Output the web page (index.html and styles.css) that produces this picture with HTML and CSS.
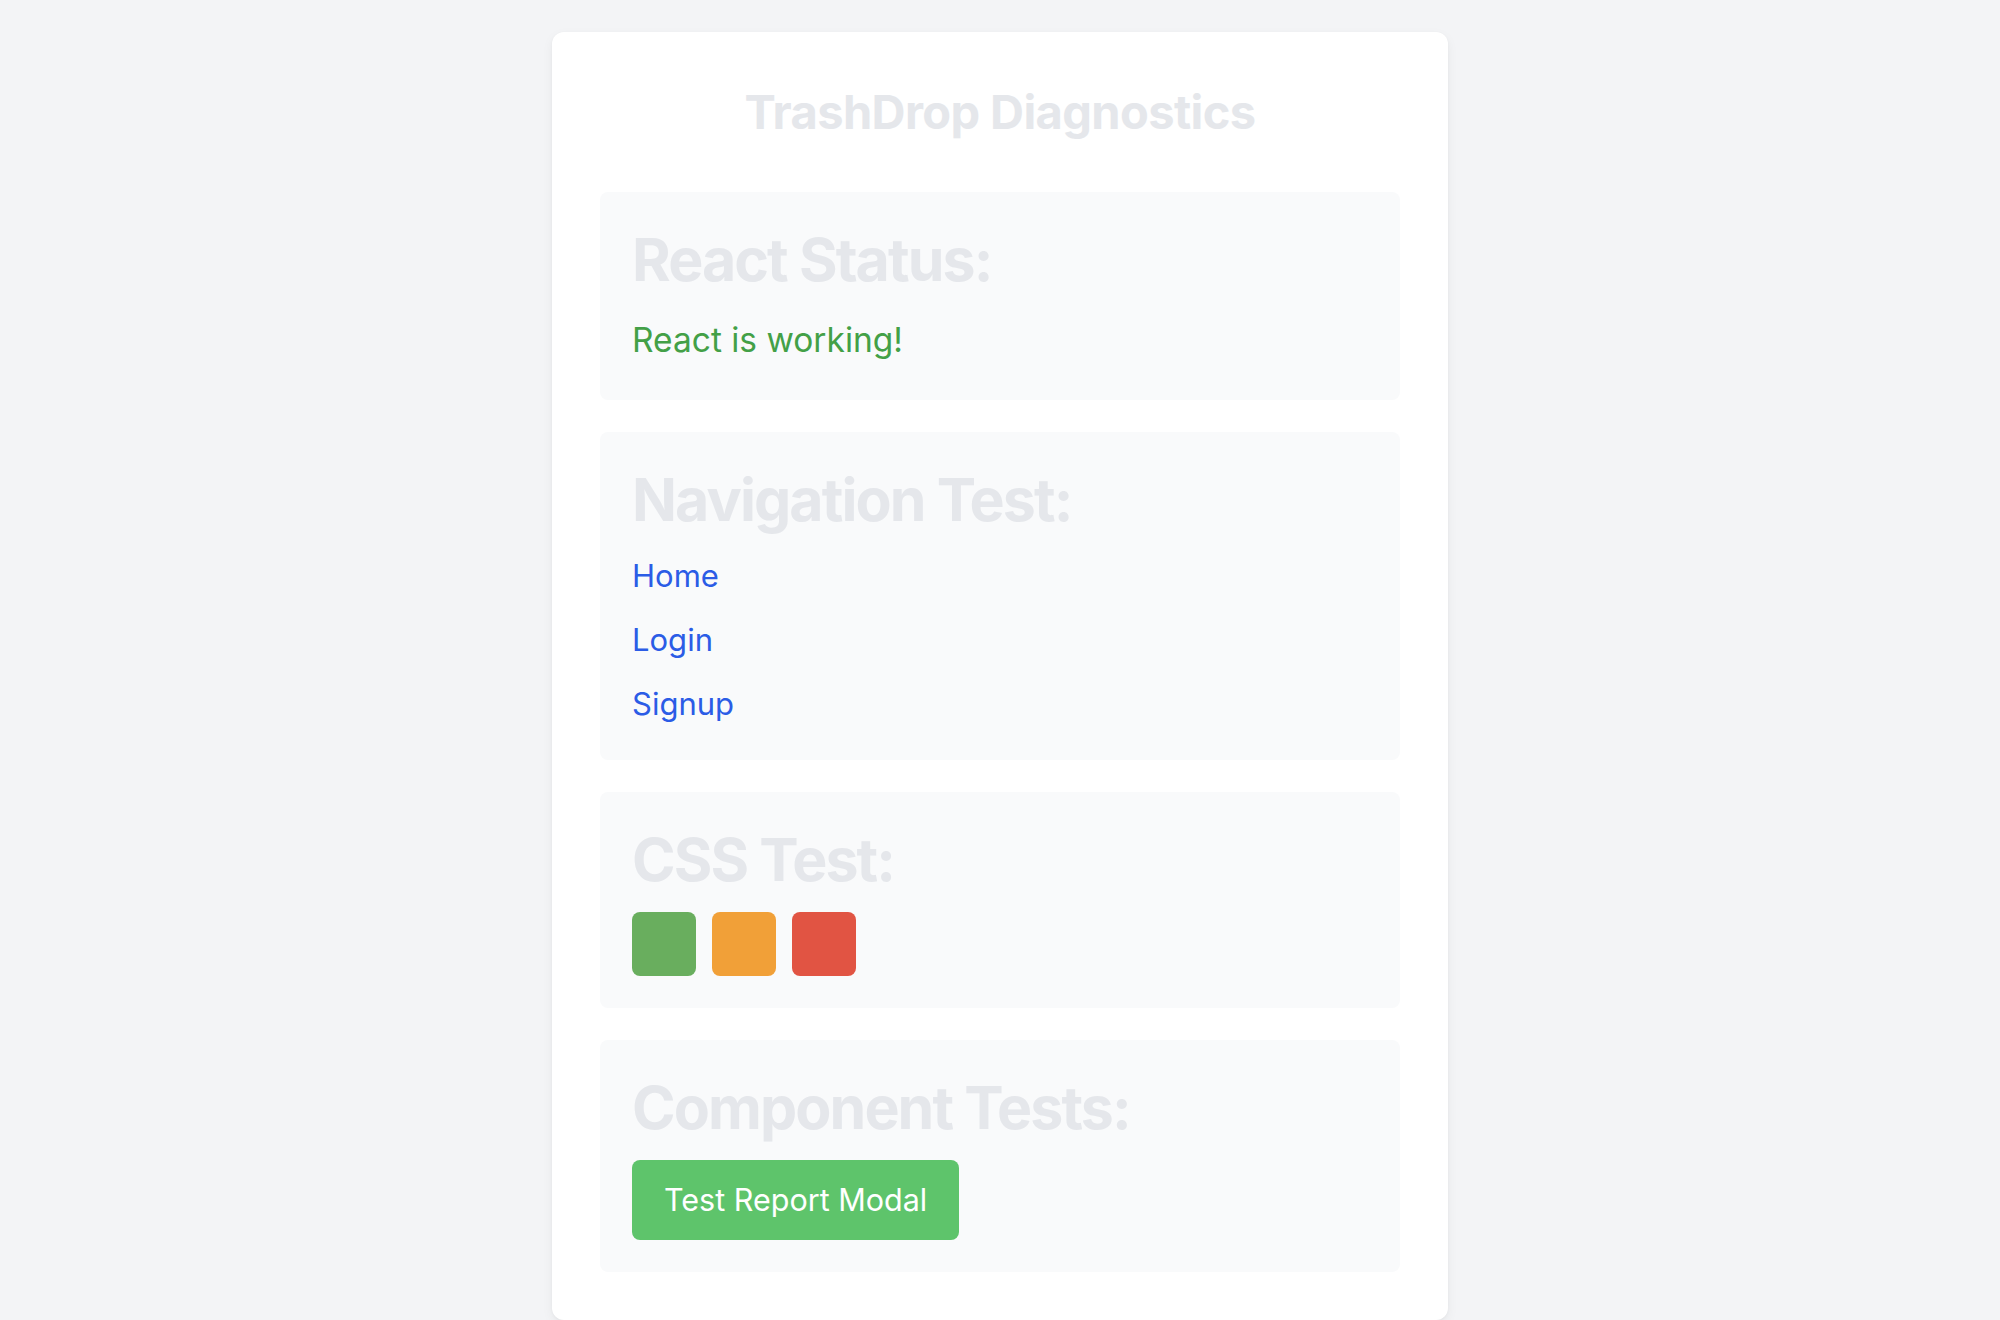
FILE: index.html
```html
<!DOCTYPE html>
<html lang="en">
<head>
<meta charset="utf-8">
<title>TrashDrop Diagnostics</title>
<link rel="stylesheet" href="styles.css">
</head>
<body>
<main class="card">
  <h1 class="title">TrashDrop Diagnostics</h1>
  <div class="sections">
    <section class="panel">
      <h2 class="panel-title">React Status:</h2>
      <p class="status">React is working!</p>
    </section>
    <section class="panel">
      <h2 class="panel-title">Navigation Test:</h2>
      <nav class="links">
        <a href="#" class="link">Home</a>
        <a href="#" class="link">Login</a>
        <a href="#" class="link">Signup</a>
      </nav>
    </section>
    <section class="panel">
      <h2 class="panel-title">CSS Test:</h2>
      <div class="swatches">
        <div class="swatch swatch-green"></div>
        <div class="swatch swatch-orange"></div>
        <div class="swatch swatch-red"></div>
      </div>
    </section>
    <section class="panel">
      <h2 class="panel-title">Component Tests:</h2>
      <div><button class="btn" type="button">Test Report Modal</button></div>
    </section>
  </div>
</main>
</body>
</html>
```
FILE: styles.css
```css
* { box-sizing: border-box; }
html, body { margin: 0; padding: 0; }
body {
  background: #f3f4f6;
  font-family: Inter, "Noto Sans", sans-serif;
  padding: 32px 0;
}
.card {
  width: 896px;
  margin: 0 auto;
  background: #ffffff;
  border-radius: 12px;
  box-shadow: 0 4px 12px rgba(0, 0, 0, 0.05), 0 1px 3px rgba(0,0,0,0.04);
  padding: 48px;
}
.title {
  margin: 0 0 48px;
  text-align: center;
  font-size: 47px;
  line-height: 64px;
  font-weight: 700;
  color: #e5e7eb;
  letter-spacing: -0.6px;
}
.sections {
  display: flex;
  flex-direction: column;
  gap: 32px;
}
.panel {
  background: #f9fafb;
  border-radius: 8px;
  padding: 32px;
}
.panel-title {
  margin: 0 0 16px;
  font-size: 59px;
  line-height: 72px;
  font-weight: 700;
  color: #e5e7eb;
  letter-spacing: -1.9px;
}
.status {
  margin: 0;
  font-size: 33.5px;
  line-height: 56px;
  color: #43a047;
}
.links {
  display: flex;
  flex-direction: column;
  align-items: flex-start;
  gap: 16px;
}
.link {
  font-size: 31px;
  line-height: 48px;
  color: #2b5ce6;
  text-decoration: none;
}
.swatches {
  display: flex;
  gap: 16px;
}
.swatch {
  width: 64px;
  height: 64px;
  border-radius: 8px;
}
.swatch-green { background: #69ae5e; }
.swatch-orange { background: #f1a038; }
.swatch-red { background: #e15443; }
.btn {
  border: none;
  background: #5ec46b;
  color: #ffffff;
  font-family: inherit;
  font-size: 30.5px;
  line-height: 48px;
  padding: 16px 32px;
  border-radius: 8px;
  cursor: pointer;
}
```
